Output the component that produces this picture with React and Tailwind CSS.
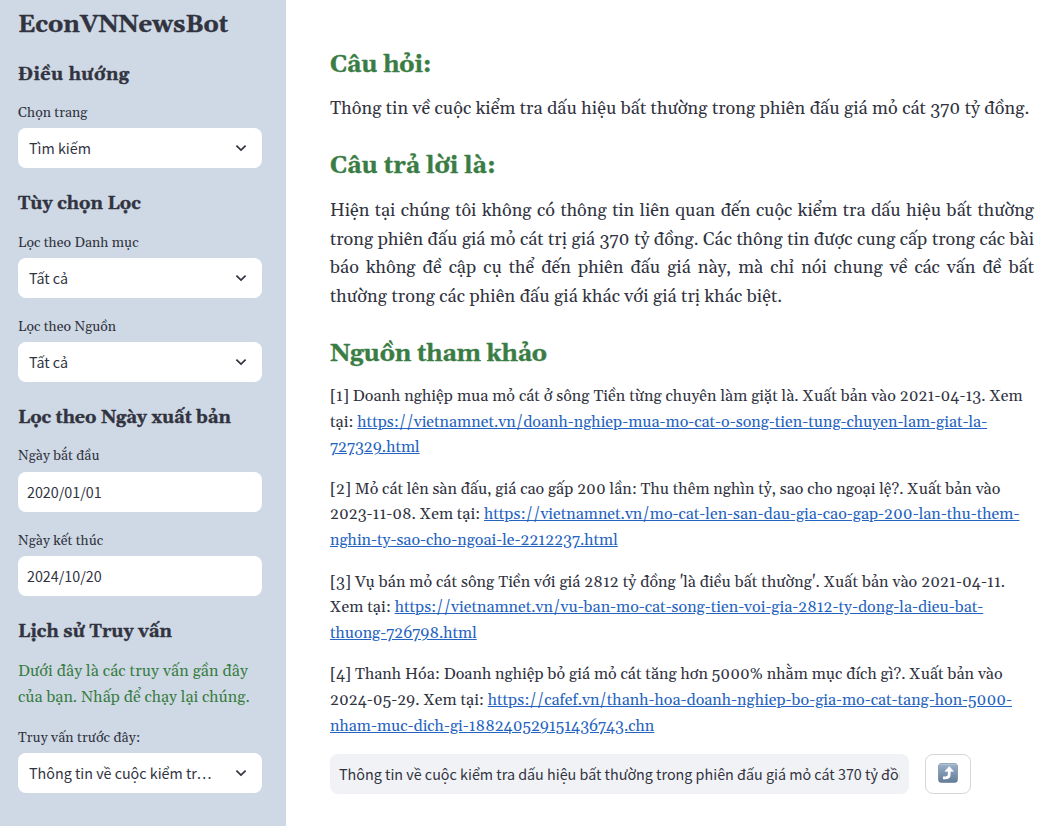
const HEADING = "h-7 text-lg font-bold leading-7 [-webkit-text-stroke:0.4px]";

function Label({ children, className = "mb-[5px]" }) {
  return <div className={`h-5 text-sm leading-5 ${className}`}>{children}</div>;
}

function Select({ children }) {
  return (
    <div className="flex h-10 items-center justify-between rounded-lg bg-white pl-[11px] pr-[15px] font-['Noto_Sans_CJK_SC',sans-serif] text-[14.3px]">
      <span className="whitespace-nowrap leading-6">{children}</span>
      <svg className="h-3 w-3" viewBox="0 0 12 12" fill="none" stroke="#31333f" strokeWidth="1.7">
        <path d="M1.4 3.6 L6 8 L10.6 3.6" />
      </svg>
    </div>
  );
}

function DateInput({ children }) {
  return (
    <div className="flex h-10 items-center rounded-lg bg-white pl-[9px] font-['Noto_Sans_CJK_SC',sans-serif] text-[14.3px]">
      {children}
    </div>
  );
}

const SOURCES = [
  {
    text: "[1] Doanh nghiệp mua mỏ cát ở sông Tiền từng chuyên làm giặt là. Xuất bản vào 2021-04-13. Xem tại: ",
    url: "https://vietnamnet.vn/doanh-nghiep-mua-mo-cat-o-song-tien-tung-chuyen-lam-giat-la-727329.html",
    tracking: "tracking-[0.03px]",
  },
  {
    text: "[2] Mỏ cát lên sàn đấu, giá cao gấp 200 lần: Thu thêm nghìn tỷ, sao cho ngoại lệ?. Xuất bản vào 2023-11-08. Xem tại: ",
    url: "https://vietnamnet.vn/mo-cat-len-san-dau-gia-cao-gap-200-lan-thu-them-nghin-ty-sao-cho-ngoai-le-2212237.html",
    tracking: "tracking-normal",
  },
  {
    text: "[3] Vụ bán mỏ cát sông Tiền với giá 2812 tỷ đồng 'là điều bất thường'. Xuất bản vào 2021-04-11. Xem tại: ",
    url: "https://vietnamnet.vn/vu-ban-mo-cat-song-tien-voi-gia-2812-ty-dong-la-dieu-bat-thuong-726798.html",
    tracking: "tracking-[0.05px]",
  },
  {
    text: "[4] Thanh Hóa: Doanh nghiệp bỏ giá mỏ cát tăng hơn 5000% nhằm mục đích gì?. Xuất bản vào 2024-05-29. Xem tại: ",
    url: "https://cafef.vn/thanh-hoa-doanh-nghiep-bo-gia-mo-cat-tang-hon-5000-nham-muc-dich-gi-188240529151436743.chn",
    tracking: "tracking-[0.02px]",
  },
];

function Sidebar() {
  return (
    <aside className="w-[286px] shrink-0 bg-[#cfd9e5] pl-[18px] pr-6 pt-[9px]">
      <h1 className="h-8 text-2xl font-bold leading-8 [-webkit-text-stroke:0.4px]">EconVNNewsBot</h1>

      <h2 className={`mt-5 tracking-[0.45px] ${HEADING}`}>Điều hướng</h2>
      <Label className="mb-[5px] mt-[14px]">Chọn trang</Label>
      <Select>Tìm kiếm</Select>

      <h2 className={`mt-[22px] ${HEADING}`}>Tùy chọn Lọc</h2>
      <Label className="mb-[5px] mt-[15px]">Lọc theo Danh mục</Label>
      <Select>Tất cả</Select>
      <Label className="mb-[5px] mt-[19px]">Lọc theo Nguồn</Label>
      <Select>Tất cả</Select>

      <h2 className={`mt-[22px] tracking-[-0.08px] ${HEADING}`}>Lọc theo Ngày xuất bản</h2>
      <Label className="mb-[6px] mt-[14px]">Ngày bắt đầu</Label>
      <DateInput>2020/01/01</DateInput>
      <Label className="mb-[5px] mt-[19px]">Ngày kết thúc</Label>
      <DateInput>2024/10/20</DateInput>

      <h2 className={`mt-[22px] tracking-[0.06px] ${HEADING}`}>Lịch sử Truy vấn</h2>
      <p className="mt-[13px] text-base leading-[25.6px] text-[#3a7d44]">
        <span className="tracking-[0.08px]">Dưới đây là các truy vấn gần đây </span>
        của bạn. Nhấp để chạy lại chúng.
      </p>
      <Label className="mb-[5px] mt-[18px]">
        <span className="tracking-[0.08px]">Truy vấn trước đây:</span>
      </Label>
      <Select>
        Thông tin về cuộc kiểm tr<span className="tracking-[1.3px]">...</span>
      </Select>
    </aside>
  );
}

function Title({ children, className = "" }) {
  return (
    <h2 className={`text-2xl font-bold leading-[29px] text-[#3a7d44] [-webkit-text-stroke:0.4px] ${className}`}>
      {children}
    </h2>
  );
}

export default function App() {
  return (
    <div className="flex h-[826px] overflow-hidden bg-white font-[Georgia,Gelasio,serif] text-[#31333f]">
      <Sidebar />
      <main className="w-[748px] pl-11 pt-[51px]">
        <Title className="tracking-[-0.15px]">Câu hỏi:</Title>
        <p className="mt-[15px] whitespace-nowrap text-lg leading-[28.8px] tracking-[0.055px]">
          Thông tin về cuộc kiểm tra dấu hiệu bất thường trong phiên đấu giá mỏ cát 370 tỷ đồng.
        </p>
        <Title className="mt-7">Câu trả lời là:</Title>
        <p className="mt-4 text-justify text-lg leading-[28.8px]">
          Hiện tại chúng tôi không có thông tin liên quan đến cuộc kiểm tra dấu hiệu bất thường trong phiên đấu giá mỏ cát
          trị giá 370 tỷ đồng. Các thông tin được cung cấp trong các bài báo không đề cập cụ thể đến phiên đấu giá này, mà
          chỉ nói chung về các vấn đề bất{" "}
          <span className="tracking-[0.08px]">thường trong các phiên đấu giá khác với giá trị khác biệt.</span>
        </p>
        <Title className="mt-7 tracking-[-0.2px]">Nguồn tham khảo</Title>
        <div className="mt-[15px] flex flex-col gap-4">
          {SOURCES.map((source) => (
            <p key={source.url} className="text-base leading-[25.6px]">
              <span className={source.tracking}>{source.text}</span>
              <a className="text-[#2563c0] underline">{source.url}</a>
            </p>
          ))}
        </div>
        <div className="mt-[15px] flex gap-4">
          <div className="h-10 w-[579px] rounded-lg bg-[#f0f2f6] px-[9px] font-['Noto_Sans_CJK_SC',sans-serif] text-[14.33px] leading-10">
            <div className="overflow-hidden whitespace-nowrap">
              Thông tin về cuộc kiểm tra dấu hiệu bất thường trong phiên đấu giá mỏ cát 370 tỷ đồng.
            </div>
          </div>
          <button className="flex h-10 w-[46px] items-center justify-center rounded-lg border border-[#d6d6d9] bg-white">
            <svg className="mb-[2px] h-5 w-5" viewBox="0 0 20 20">
              <defs>
                <linearGradient id="key" x1="0" y1="0" x2="0" y2="1">
                  <stop offset="0" stopColor="#9fb3ca" />
                  <stop offset="0.5" stopColor="#7f97b3" />
                  <stop offset="1" stopColor="#647e9b" />
                </linearGradient>
              </defs>
              <rect x="0.3" y="0.3" width="19.4" height="19.4" rx="3.2" fill="#5d7590" />
              <rect x="0.7" y="0.5" width="18.6" height="18.4" rx="3" fill="url(#key)" />
              <path d="M1.8 1.5 H18.2" stroke="#bccbdc" strokeWidth="0.7" strokeLinecap="round" />
              <path d="M5 14.9 H7.3 Q11.2 14.9 11.2 11.5 V7" fill="none" stroke="#fff" strokeWidth="2.7" />
              <path d="M11.2 3.4 L15.4 8.3 H7 Z" fill="#fff" stroke="#fff" strokeWidth="0.6" strokeLinejoin="round" />
            </svg>
          </button>
        </div>
      </main>
    </div>
  );
}
